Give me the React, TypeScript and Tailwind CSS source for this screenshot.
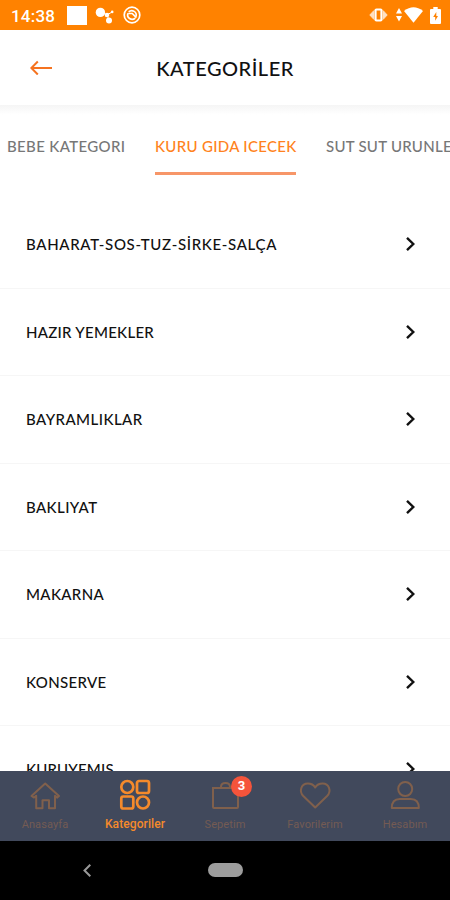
import type { ReactNode } from 'react'

type Category = { name: string; tracking: string }

const categories: Category[] = [
  { name: 'BAHARAT-SOS-TUZ-SİRKE-SALÇA', tracking: 'tracking-[0.67px]' },
  { name: 'HAZIR YEMEKLER', tracking: 'tracking-[0.27px]' },
  { name: 'BAYRAMLIKLAR', tracking: 'tracking-[0.45px]' },
  { name: 'BAKLIYAT', tracking: 'tracking-[0.4px]' },
  { name: 'MAKARNA', tracking: 'tracking-[0.35px]' },
  { name: 'KONSERVE', tracking: 'tracking-[0.35px]' },
  { name: 'KURUYEMIS', tracking: 'tracking-[0.2px]' },
]

function StatusBar() {
  return (
    <div className="flex h-[30px] shrink-0 items-center bg-[#ff8200] pl-[11px] text-white">
      <span className="w-[56px] pt-[2px] font-[Roboto] text-[17px] leading-[30px] font-medium tracking-[0.2px]">14:38</span>
      <div className="h-[19px] w-5 bg-white" />
      <svg width="20" height="20" viewBox="0 0 20 20" className="ml-[8px]" fill="currentColor">
        <circle cx="5.4" cy="7.4" r="4.7" />
        <circle cx="12" cy="10" r="2.3" />
        <circle cx="14" cy="15.4" r="3" />
        <circle cx="17.2" cy="6.9" r="1.3" />
        <path d="m8 8 4 2 2 5M12 10l5-3" stroke="currentColor" strokeWidth="1" fill="none" />
      </svg>
      <svg width="18" height="18" viewBox="0 0 18 18" className="ml-[8px]" fill="none" stroke="currentColor" strokeWidth="1.7">
        <circle cx="9" cy="9" r="7.8" />
        <path d="M12.2 12.2A4.5 4.5 0 0 1 5 7.2M5.7 5.8A4.5 4.5 0 0 1 13 10.5" />
        <path d="M5.2 7.5h4l4.2 4.2" />
      </svg>
      <div className="ml-auto flex items-center pr-[9px]">
        <svg width="19" height="16" viewBox="0 0 19 16" fill="none" stroke="currentColor">
          <path d="M5 3.5.8 8 5 12.500M14 3.500 18.200 8 14 12.500" fill="#ffe0c2" stroke="#ffe0c2" strokeWidth="1" />
          <rect x="6.500" y="2.500" width="6" height="11" rx="1" fill="#ff8200" strokeWidth="2.200" />
        </svg>
        <svg width="6" height="14" viewBox="0 0 6 14" className="ml-[8px]" fill="currentColor">
          <path d="M3 0 6 5.500H0zM3 13.500 0 8h6z" />
        </svg>
        <svg width="19" height="16" viewBox="0 0 19 16" className="ml-[2px]" fill="currentColor">
          <path d="M0 4Q9.5-3.5 19 4L9.5 15.8z" />
        </svg>
        <svg width="11" height="17" viewBox="0 0 11 17" className="ml-[7px]">
          <path d="M3.3 0h4.400v2H10q1 0 1 1v13q0 1-1 1H1q-1 0-1-1V3q0-1 1-1h2.300z" fill="currentColor" />
          <path d="M6.300 5 3.200 10h2v3.700L8 9H6.300z" fill="#ff8200" />
        </svg>
      </div>
    </div>
  )
}

function Header() {
  return (
    <header className="grid h-[75px] shrink-0 grid-cols-[1fr_auto_1fr] items-center bg-white">
      <svg width="22" height="15" viewBox="0 0 22 15" className="ml-[30px]" fill="none" stroke="#f57320" strokeWidth="2">
        <path d="M22 8H1.3M7.800 1.500 1.300 8l6.500 6.500" />
      </svg>
      <h1 className="pt-px text-[20px] leading-6 font-medium tracking-[0.5px] text-[#111]">KATEGORİLER</h1>
    </header>
  )
}

function Tabs() {
  return (
    <nav className="flex h-24 shrink-0 gap-[30px] overflow-hidden bg-gradient-to-b from-[#f5f5f5] to-white to-10% pl-[7px] text-[15px] font-medium whitespace-nowrap text-[#777]">
      <div className="w-[118px] shrink-0 pt-[31px] leading-5 tracking-[0.35px]">BEBE KATEGORI</div>
      <div className="h-[70px] w-[141px] shrink-0 border-b-[3px] border-[#f79668] pt-[31px] leading-5 tracking-[0.32px] text-[#ff8220]">
        KURU GIDA ICECEK
      </div>
      <div className="shrink-0 pt-[31px] leading-5 tracking-[0.25px]">SUT SUT URUNLERI</div>
    </nav>
  )
}

function CategoryRow({ name, tracking }: Category) {
  return (
    <li className="flex h-[87.5px] shrink-0 items-center justify-between border-b border-[#f6f6f6] pr-[35px] pl-[26px]">
      <span className={`text-[15px] leading-5 font-medium text-[#111] ${tracking}`}>{name}</span>
      <svg width="9" height="14" viewBox="0 0 9 14" fill="none" stroke="#111" strokeWidth="2.4">
        <path d="m1 .9 6.3 6.1L1 13.1" />
      </svg>
    </li>
  )
}

function NavItem({ label, active, children }: { label: string; active?: boolean; children: ReactNode }) {
  return (
    <div className={`flex w-[90px] flex-col items-center pt-[8px] ${active ? 'text-[#f58a2b]' : 'text-[#80604c]'}`}>
      <div className="relative h-[34px] w-[34px]">{children}</div>
      <span
        className={`font-[Roboto] leading-4 ${active ? 'mt-[3px] text-[12px] font-medium tracking-[0.1px]' : 'mt-[4px] text-[11px] tracking-[0.1px] text-[#745b53]'}`}
      >
        {label}
      </span>
    </div>
  )
}

function BottomNav() {
  return (
    <nav className="flex h-[70px] shrink-0 bg-[#41495c]">
      <NavItem label="Anasayfa">
        <svg width="34" height="34" viewBox="0 0 34 34" fill="none" stroke="currentColor" strokeWidth="2" strokeLinejoin="round">
          <path d="M3.5 17 17.200 4.500 31 17l-2 1.600-2-1.800v12.500h-6v-8h-6.500v8H8.200v-12.500l-2.200 1.800z" />
        </svg>
      </NavItem>
      <NavItem label="Kategoriler" active>
        <svg width="34" height="34" viewBox="0 0 34 34" fill="none" stroke="currentColor" strokeWidth="2.7">
          <circle cx="9.3" cy="8" r="6" />
          <rect x="19" y="2" width="12" height="12" rx="2" />
          <rect x="3.3" y="17.500" width="12" height="12" rx="2" />
          <circle cx="25" cy="23.500" r="6" />
        </svg>
      </NavItem>
      <NavItem label="Sepetim">
        <svg width="34" height="34" viewBox="0 0 34 34" fill="none" stroke="currentColor" strokeWidth="2">
          <path d="M5 9h25v19q0 1-1 1H6q-1 0-1-1zM13 9V8q0-4 4.500-4T22 8v1" />
        </svg>
        <span className="absolute -top-[3px] left-[23px] flex h-[21px] w-[21px] items-center justify-center rounded-full bg-[#f5543b] font-[Roboto] text-[13px] font-bold text-white">
          3
        </span>
      </NavItem>
      <NavItem label="Favorilerim">
        <svg width="34" height="34" viewBox="0 0 34 34" fill="none" stroke="currentColor" strokeWidth="2" strokeLinejoin="round">
          <path d="M17.2 28.500 5.300 17C.5 12 3.500 4.500 9.800 4.500c3.300 0 6 1.600 7.400 4 1.400-2.400 4.100-4 7.400-4 6.300 0 9.300 7.500 4.500 12.500z" />
        </svg>
      </NavItem>
      <NavItem label="Hesabım">
        <svg width="34" height="34" viewBox="0 0 34 34" fill="none" stroke="currentColor" strokeWidth="2" strokeLinejoin="round">
          <circle cx="17.2" cy="10" r="7" />
          <path d="M3.800 29c0-6 3-9 8-9h11c5 0 8 3 8 9z" />
        </svg>
      </NavItem>
    </nav>
  )
}

function SystemBar() {
  return (
    <div className="flex h-[59.5px] shrink-0 items-center bg-black">
      <svg width="8" height="13" viewBox="0 0 8 13" className="ml-[83px]" fill="none" stroke="#999" strokeWidth="2">
        <path d="M7.3.7 1.5 6.5l5.8 5.8" />
      </svg>
      <div className="ml-[117px] h-[14px] w-[35px] rounded-full bg-[#9d9d9d]" />
    </div>
  )
}

export default function App() {
  return (
    <div className="flex h-[900px] w-[450px] flex-col overflow-hidden bg-white font-[Lato,sans-serif]">
      <StatusBar />
      <Header />
      <Tabs />
      <ul className="flex min-h-0 flex-1 flex-col overflow-hidden">
        {categories.map((c) => (
          <CategoryRow key={c.name} {...c} />
        ))}
      </ul>
      <BottomNav />
      <SystemBar />
    </div>
  )
}
